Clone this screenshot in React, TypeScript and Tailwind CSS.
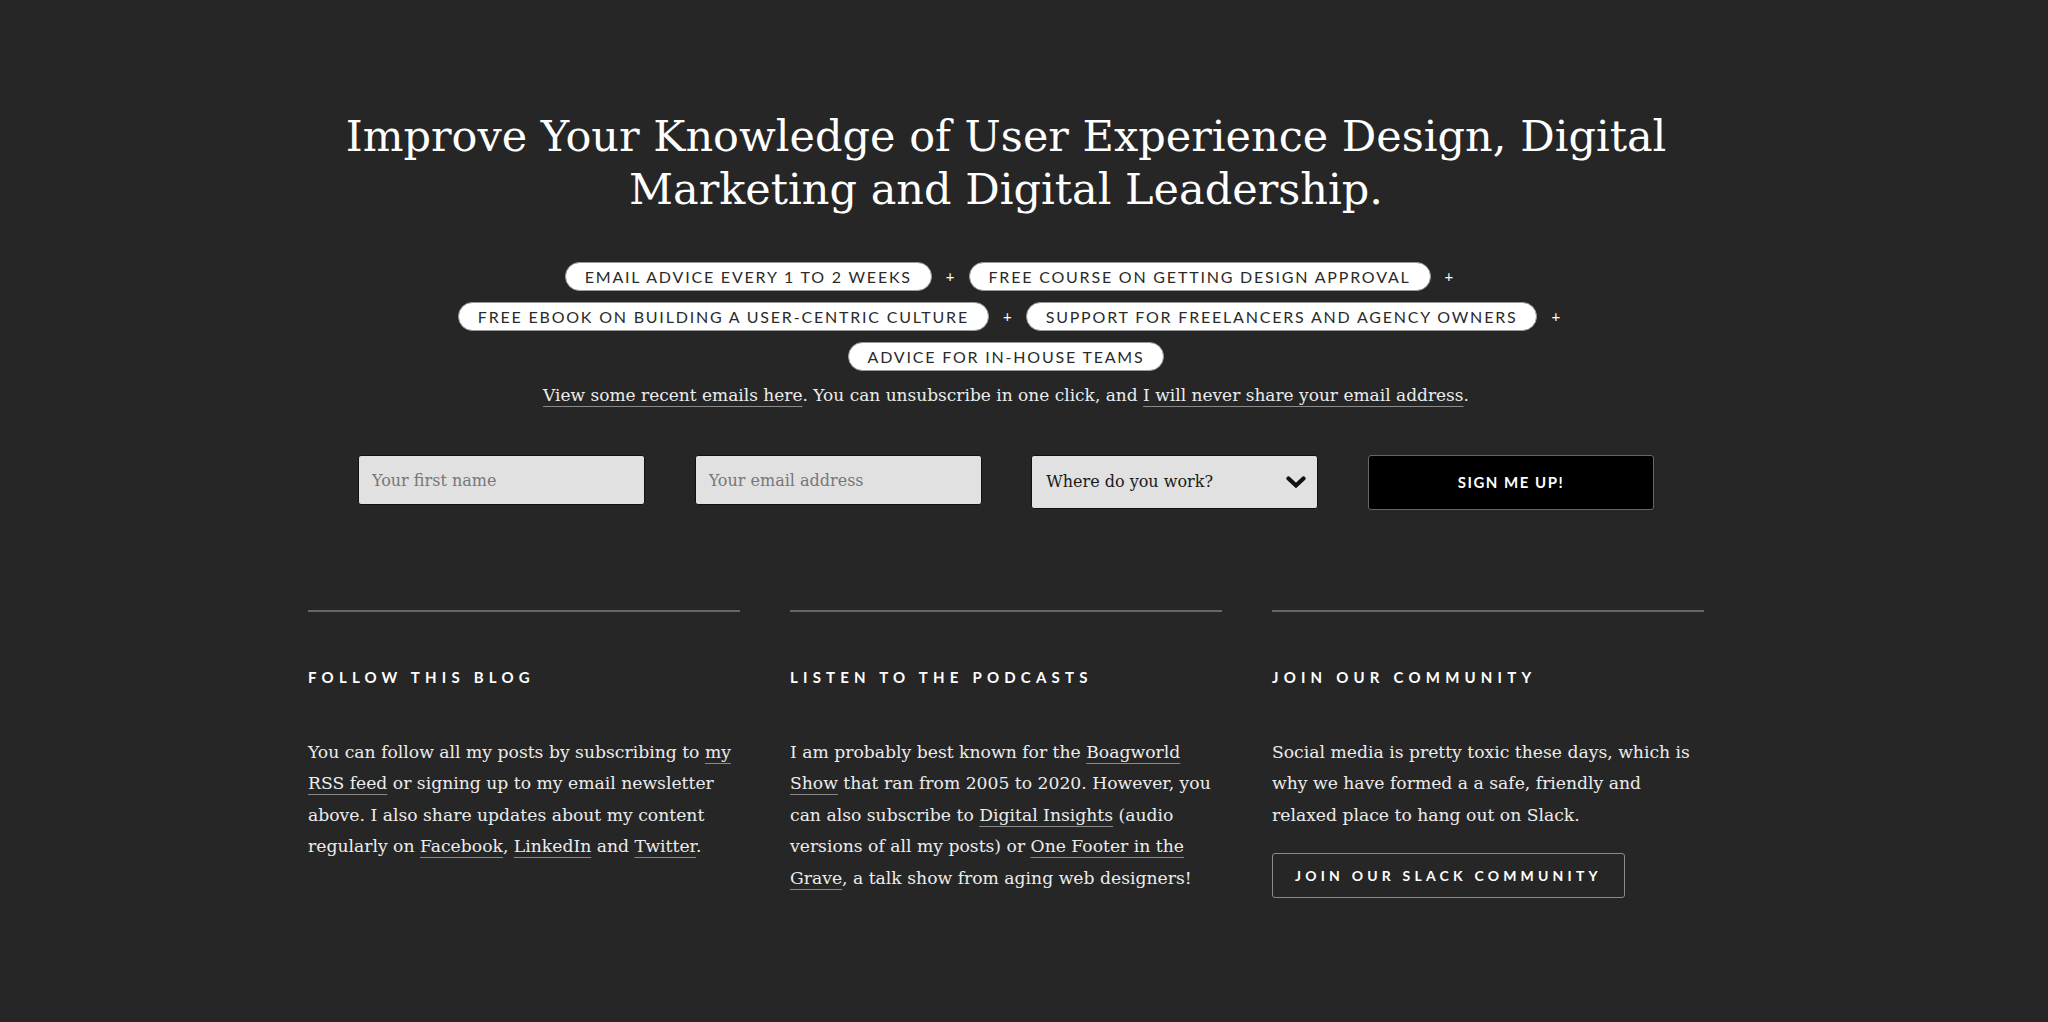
const serif = { fontFamily: '"DejaVu Serif", "Liberation Serif", serif' };
const sans = { fontFamily: 'Lato, "Open Sans", sans-serif' };

function Pill({ children }: { children: string }) {
  return (
    <span className="inline-flex h-[29px] items-center rounded-full border border-[#999] bg-white px-[19px] text-[16px] uppercase tracking-[1.8px] text-[#2a2a2a]" style={sans}>
      {children}
    </span>
  );
}

function Plus() {
  return <span className="mx-[14px] text-[15px] text-white" style={sans}>+</span>;
}

function A({ children }: { children: string }) {
  return <a href="#" className="underline decoration-[#8a8a8a] decoration-1 underline-offset-[5px]">{children}</a>;
}

function Chevron() {
  return (
    <svg width="20" height="14" viewBox="0 0 20 14" aria-hidden="true">
      <path d="M2.5 3.5 L10 10.5 L17.5 3.5" fill="none" stroke="#111" strokeWidth="4.2" strokeLinecap="round" strokeLinejoin="miter" />
    </svg>
  );
}

export default function App() {
  return (
    <div className="min-h-[1022px] w-full bg-[#262626] pr-[36px]">
      <div className="mx-auto w-[1396px] pt-[110px]">
        {/* Intro */}
        <h1 className="text-center text-[43px] leading-[53px] text-white" style={serif}>
          Improve Your Knowledge of User Experience Design, Digital
          <br />
          Marketing and Digital Leadership.
        </h1>

        <div className="mt-[46px] flex flex-col items-center gap-[11px]">
          <div className="flex items-center pl-[20px]">
            <Pill>Email advice every 1 to 2 weeks</Pill>
            <Plus />
            <Pill>Free course on getting design approval</Pill>
            <Plus />
          </div>
          <div className="flex items-center pl-[20px]">
            <Pill>Free ebook on building a user-centric culture</Pill>
            <Plus />
            <Pill>Support for freelancers and agency owners</Pill>
            <Plus />
          </div>
          <div className="flex items-center">
            <Pill>Advice for in-house teams</Pill>
          </div>
        </div>

        <p className="mt-[9px] text-center text-[17px] leading-[30px] text-[#ececec]" style={serif}>
          <A>View some recent emails here</A>. You can unsubscribe in one click, and <A>I will never share your email address</A>.
        </p>

        {/* Form */}
        <form className="mx-auto mt-[45px] flex w-[1296px] items-start justify-between">
          <input
            placeholder="Your first name"
            className="h-[50px] w-[287px] rounded-[3px] border border-[#111] bg-[#e1e1e1] px-[13px] text-[16px] text-[#222] placeholder:text-[#777] outline-none"
            style={serif}
          />
          <input
            placeholder="Your email address"
            className="h-[50px] w-[287px] rounded-[3px] border border-[#111] bg-[#e1e1e1] px-[13px] text-[16px] text-[#222] placeholder:text-[#777] outline-none"
            style={serif}
          />
          <div className="flex h-[54px] w-[287px] items-center justify-between rounded-[3px] border border-[#111] bg-[#e1e1e1] pl-[14px] pr-[11px] text-[16px] text-[#1a1a1a]" style={serif}>
            <span>Where do you work?</span>
            <Chevron />
          </div>
          <button type="button" className="flex h-[55px] w-[286px] items-center justify-center rounded-[3px] border border-[#666] bg-black text-[15px] font-bold uppercase tracking-[1.5px] text-white" style={sans}>
            Sign me up!
          </button>
        </form>

        {/* Columns */}
        <div className="mt-[100px] grid grid-cols-3 gap-[50px] text-[17.2px] leading-[31.5px] text-[#ececec]" style={serif}>
          <div className="border-t-2 border-[#666]">
            <h3 className="mt-[50px] text-[15px] font-bold uppercase tracking-[5.2px] text-white" style={sans}>Follow this blog</h3>
            <p className="mt-[43px]">
              You can follow all my posts by subscribing to <A>my RSS feed</A> or signing up to my email newsletter above. I also share updates about my content regularly on <A>Facebook</A>, <A>LinkedIn</A> and <A>Twitter</A>.
            </p>
          </div>
          <div className="border-t-2 border-[#666]">
            <h3 className="mt-[50px] text-[15px] font-bold uppercase tracking-[5.2px] text-white" style={sans}>Listen to the podcasts</h3>
            <p className="mt-[43px]">
              I am probably best known for the <A>Boagworld Show</A> that ran from 2005 to 2020. However, you can also subscribe to <A>Digital Insights</A> (audio versions of all my posts) or <A>One Footer in the Grave</A>, a talk show from aging web designers!
            </p>
          </div>
          <div className="border-t-2 border-[#666]">
            <h3 className="mt-[50px] text-[15px] font-bold uppercase tracking-[5.2px] text-white" style={sans}>Join our community</h3>
            <p className="mt-[43px]">
              Social media is pretty toxic these days, which is why we have formed a a safe, friendly and relaxed place to hang out on Slack.
            </p>
            <a href="#" className="mt-[22px] inline-flex h-[45px] items-center rounded-[3px] border border-[#8a8a8a] px-[22px] text-[14px] font-bold uppercase tracking-[4.2px] text-white" style={sans}>
              Join our Slack community
            </a>
          </div>
        </div>
      </div>
    </div>
  );
}
